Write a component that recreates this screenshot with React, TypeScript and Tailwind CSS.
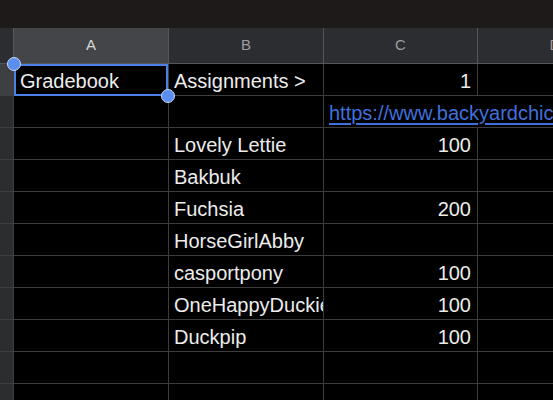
import React from "react";

type Row = {
  a?: string;
  b?: string;
  c?: string;
  link?: string;
};

const rows: Row[] = [
  { a: "Gradebook", b: "Assignments >", c: "1" },
  { link: "https://www.backyardchickens.com/threads/gradebook.1234567/" },
  { b: "Lovely Lettie", c: "100" },
  { b: "Bakbuk" },
  { b: "Fuchsia", c: "200" },
  { b: "HorseGirlAbby" },
  { b: "casportpony", c: "100" },
  { b: "OneHappyDuckie", c: "100" },
  { b: "Duckpip", c: "100" },
  {},
  {},
];

const cellBase = "h-[32px] shrink-0 border-r border-b border-[#3d3d40] bg-black flex items-center overflow-hidden whitespace-nowrap pt-[2px]";

function HeaderCell({ label, active, width }: { label: string; active?: boolean; width: string }) {
  return (
    <div
      className={`${width} h-full shrink-0 flex items-center justify-center border-r border-b border-[#55565a] text-[15px] ${
        active ? "bg-[#444548] text-[#d6d6d6]" : "bg-[#2c2d31] text-[#9c9c9f]"
      }`}
    >
      {label}
    </div>
  );
}

export default function App() {
  return (
    <div
      className="w-[553px] h-[400px] overflow-hidden bg-black relative"
      style={{ fontFamily: '"Liberation Sans", Arial, sans-serif' }}
    >
      <div className="h-[28px] bg-[#1e1a1a]" />

      <div className="flex h-[36px]">
        <div className="w-[14px] h-full shrink-0 bg-[#2c2d31] border-r border-b border-[#55565a]" />
        <HeaderCell label="A" active width="w-[155px]" />
        <HeaderCell label="B" width="w-[155px]" />
        <HeaderCell label="C" width="w-[154px]" />
        <HeaderCell label="D" width="w-[155px]" />
      </div>

      {rows.map((row, i) => (
        <div key={i} className="flex text-[20px] text-[#ececec]">
          <div
            className={`w-[14px] h-[32px] shrink-0 border-r border-b border-[#3d3d40] ${
              i === 0 ? "bg-[#3e3f42]" : "bg-[#2c2d31]"
            }`}
          />
          <div className={`${cellBase} w-[155px] pl-[6px]`}>{row.a}</div>
          <div className={`${cellBase} w-[155px] pl-[5px]`}>{row.b}</div>
          {row.link ? (
            <div className="h-[32px] w-[154px] shrink-0 border-b border-[#3d3d40] bg-black flex items-center whitespace-nowrap pl-[5px] pt-[2px] relative z-10">
              <span className="text-[#3f70dd] underline underline-offset-[3px]">{row.link}</span>
            </div>
          ) : (
            <div className={`${cellBase} w-[154px] justify-end pr-[6px]`}>{row.c}</div>
          )}
          <div className={`${cellBase} w-[155px]`} />
        </div>
      ))}

      {/* selection on A1 */}
      <div className="absolute left-[14px] top-[64px] w-[154px] h-[32px] border-2 border-[#4a80e8] pointer-events-none" />
      <div className="absolute left-[7px] top-[57px] w-[14px] h-[14px] rounded-full bg-[#5a8ef0] border border-[#c9d6f2]" />
      <div className="absolute left-[161px] top-[89px] w-[14px] h-[14px] rounded-full bg-[#5a8ef0] border border-[#c9d6f2]" />
    </div>
  );
}
